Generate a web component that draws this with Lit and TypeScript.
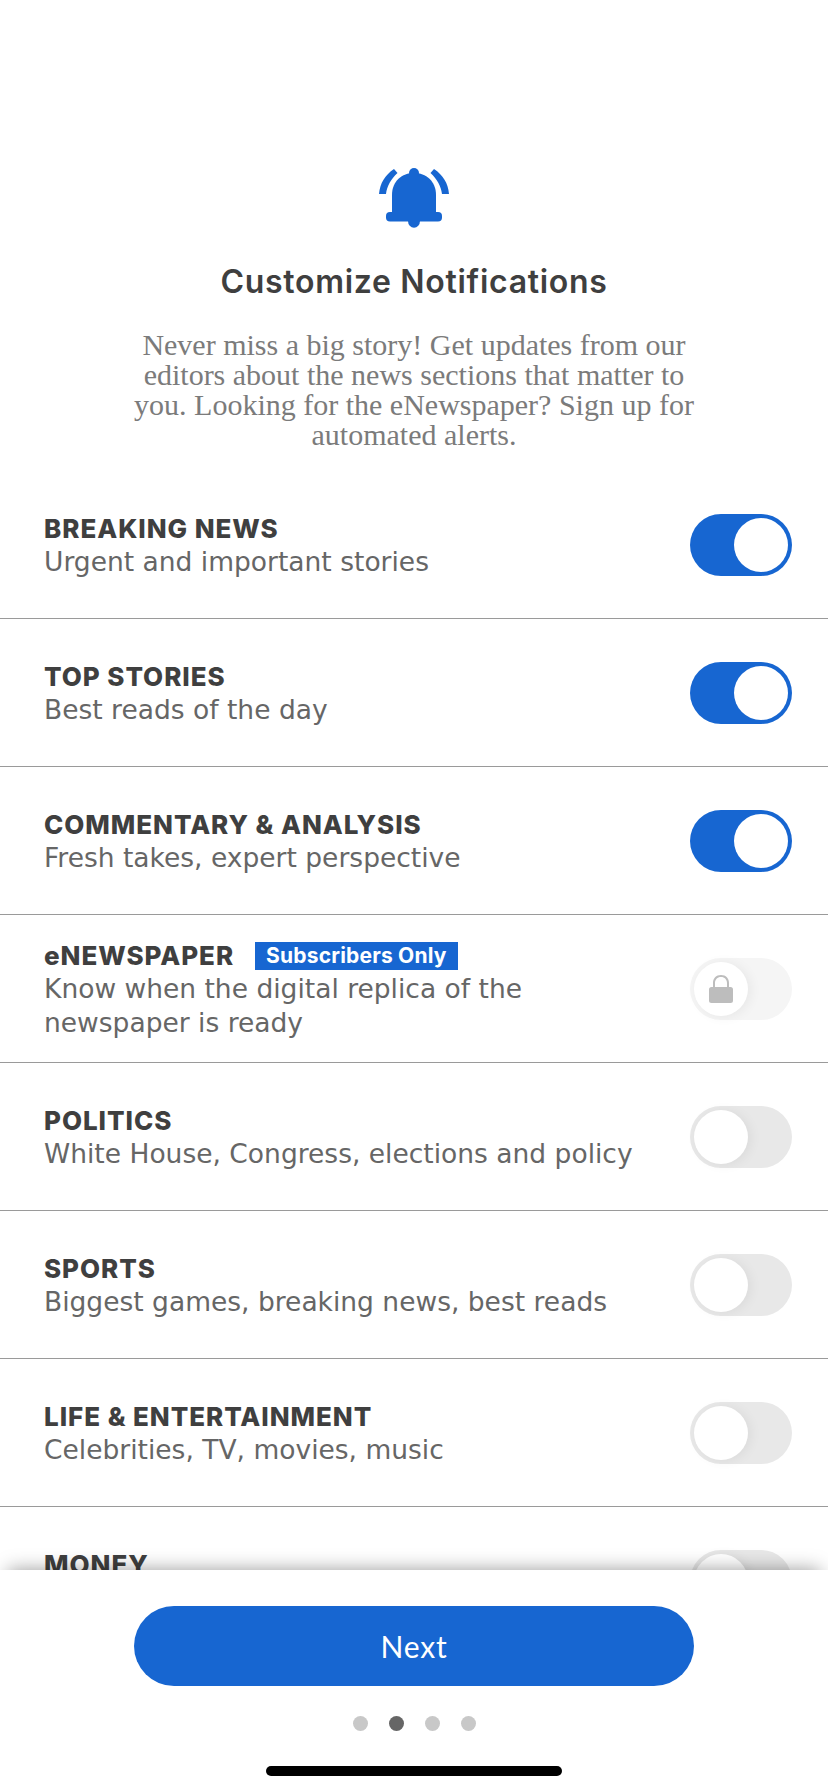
import { LitElement, html, css, svg } from "lit";
import { customElement } from "lit/decorators.js";

interface Row { title: string; sub: string; state: "on" | "off" | "locked"; badge?: string; }

const ROWS: Row[] = [
  { title: "BREAKING NEWS", sub: "Urgent and important stories", state: "on" },
  { title: "TOP STORIES", sub: "Best reads of the day", state: "on" },
  { title: "COMMENTARY & ANALYSIS", sub: "Fresh takes, expert perspective", state: "on" },
  { title: "eNEWSPAPER", sub: "Know when the digital replica of the newspaper is ready", state: "locked", badge: "Subscribers Only" },
  { title: "POLITICS", sub: "White House, Congress, elections and policy", state: "off" },
  { title: "SPORTS", sub: "Biggest games, breaking news, best reads", state: "off" },
  { title: "LIFE & ENTERTAINMENT", sub: "Celebrities, TV, movies, music", state: "off" },
  { title: "MONEY", sub: "\u00a0", state: "off" },
];

const bell = svg`<circle cx="35" cy="5" r="5"/><path d="M13 44V27C13 13 23 5 35 5s22 8 22 22v17z"/><rect x="7" y="44" width="56" height="9.500" rx="4"/><path d="M29 53h12a6 6.800 0 0 1-12 0z"/><path d="M15 1l3.500 4C12 11 8 18 7 26H0C1 15 6 7 15 1z"/><path d="M55 1l-3.500 4C58 11 62 18 63 26h7C69 15 64 7 55 1z"/>`;

@customElement("app-root")
export class AppRoot extends LitElement {
  static styles = css`
    :host { display: block; width: 828px; height: 1792px; background: #fff; overflow: hidden; }
    .page { display: flex; flex-direction: column; height: 1792px; }
    .scroll { flex: 1; min-height: 0; overflow: hidden; }
    .head { display: flex; flex-direction: column; align-items: center; padding-top: 168px; height: 471px; box-sizing: border-box; }
    .bell { width: 70px; height: 61px; fill: #1766d1; overflow: visible; display: block; flex: none; }
    h1 { margin: 33px 0 0; font: 600 32px/40px Inter, sans-serif; letter-spacing: 0.7px; color: #3f3f3f; }
    .lede { margin: 28px 0 0; width: 570px; text-align: center; font: 400 30px/30px "Liberation Serif", serif; color: #7b7b7b; }
    .row { display: flex; align-items: center; justify-content: space-between; height: 148px; box-sizing: border-box; padding: 0 36px 0 44px; border-bottom: 1px solid #9a9a9a; }
    .text { width: 590px; padding-top: 2px; }
    .title { display: flex; align-items: center; gap: 21px; font: 800 26px/33px Inter, sans-serif; letter-spacing: 0.95px; color: #3f3f3f; }
    .badge { font: 700 21px/28px Inter, sans-serif; color: #fff; background: #1766d1; padding: 0 11px; letter-spacing: 0.2px; }
    .sub { font: 400 26.500px/34px "DejaVu Sans", sans-serif; color: #666; }
    .toggle { position: relative; flex: none; width: 102px; height: 62px; border-radius: 31px; background: #e8e8e8; box-sizing: border-box; }
    .knob { position: absolute; top: 4px; left: 4px; width: 54px; height: 54px; border-radius: 50%; background: #fff; display: flex; align-items: center; justify-content: center; box-shadow: 3px 1px 12px rgba(0,0,0,.06); }
    .on { background: #1766d1; }
    .on .knob { left: 44px; box-shadow: none; }
    .locked { background: #f5f5f5; }
    .lock { width: 24px; height: 30px; fill: #bdbdbd; display: block; }
    .foot { position: relative; flex: none; height: 222px; background: #fff; box-shadow: 0 -8px 18px -8px rgba(0,0,0,.4); display: flex; flex-direction: column; align-items: center; }
    .next { margin-top: 36px; width: 560px; height: 80px; border: 0; border-radius: 40px; background: #1766d1; color: #fff; font: 400 30px/80px Lato, sans-serif; letter-spacing: 0.8px; padding: 0; }
    .dots { display: flex; gap: 21px; margin-top: 30px; }
    .dot { width: 15px; height: 15px; border-radius: 50%; background: #c8c8c8; }
    .dot.cur { background: #666; }
    .home { margin-top: 35px; width: 296px; height: 10px; border-radius: 5px; background: #000; }
  `;

  render() {
    return html`<div class="page">
      <div class="scroll">
        <div class="head">
          <svg class="bell" viewBox="0 0 70 61">${bell}</svg>
          <h1>Customize Notifications</h1>
          <p class="lede">Never miss a big story! Get updates from our editors about the news sections that matter to you. Looking for the eNewspaper? Sign up for automated alerts.</p>
        </div>
        ${ROWS.map(r => html`<div class="row">
          <div class="text">
            <div class="title">${r.title}${r.badge ? html`<span class="badge">${r.badge}</span>` : ""}</div>
            <div class="sub">${r.sub}</div>
          </div>
          <div class="toggle ${r.state}"><div class="knob">${r.state === "locked" ? html`<svg class="lock" viewBox="0 0 24 30"><path d="M12 1C7 1 4 4.500 4 9v4H2.500A2.500 2.500 0 0 0 0 15.500v11A2.500 2.500 0 0 0 2.500 29h19a2.500 2.500 0 0 0 2.500-2.500v-11a2.500 2.500 0 0 0-2.500-2.500H20V9c0-4.500-3-8-8-8zm0 2c3.700 0 6 2.700 6 6v4H6V9c0-3.300 2.300-6 6-6z"/></svg>` : ""}</div></div>
        </div>`)}
      </div>
      <div class="foot">
        <button class="next">Next</button>
        <div class="dots"><span class="dot"></span><span class="dot cur"></span><span class="dot"></span><span class="dot"></span></div>
        <div class="home"></div>
      </div>
    </div>`;
  }
}
